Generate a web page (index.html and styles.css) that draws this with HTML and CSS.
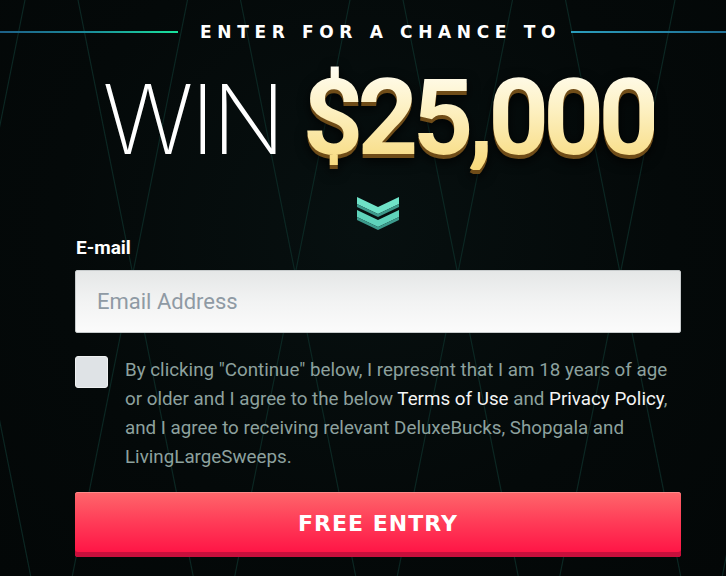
FILE: index.html
```html
<!DOCTYPE html>
<html lang="en">
<head>
<meta charset="utf-8">
<title>Win $25,000</title>
<link rel="stylesheet" href="styles.css">
</head>
<body>
<svg class="bg-lines" width="726" height="576" viewBox="0 0 726 576" aria-hidden="true">
  <g stroke="#0c2723" stroke-width="1.2" fill="none">
    <line x1="-84.5" y1="0" x2="30.7" y2="576"/>
    <line x1="25" y1="0" x2="-90.2" y2="576"/>
    <line x1="78" y1="0" x2="193.2" y2="576"/>
    <line x1="187.5" y1="0" x2="72.3" y2="576"/>
    <line x1="240.5" y1="0" x2="355.7" y2="576"/>
    <line x1="350" y1="0" x2="234.8" y2="576"/>
    <line x1="403" y1="0" x2="518.2" y2="576"/>
    <line x1="512.5" y1="0" x2="397.3" y2="576"/>
    <line x1="565.5" y1="0" x2="680.7" y2="576"/>
    <line x1="675" y1="0" x2="559.8" y2="576"/>
    <line x1="728" y1="0" x2="843.2" y2="576"/>
    <line x1="837.5" y1="0" x2="722.3" y2="576"/>
  </g>
</svg>

<header class="kicker">
  <span class="kicker-line kicker-line-left"></span>
  <h2 class="kicker-text">ENTER FOR A CHANCE TO</h2>
  <span class="kicker-line kicker-line-right"></span>
</header>

<main class="panel">
  <h1 class="headline"><span class="win">WIN</span><span class="amount">$25,000</span></h1>

  <svg class="chevrons" width="42" height="36" viewBox="0 0 42 36" aria-hidden="true">
    <polygon points="0,3 21,13 42,3 42,10 21,20 0,10" fill="#6fe3c8"/>
    <polygon points="0,10 21,20 42,10 42,13 21,23 0,13" fill="#3c9a8c"/>
    <polygon points="0,16 21,26 42,16 42,23 21,33 0,23" fill="#5fd3bb"/>
    <polygon points="0,23 21,33 42,23 42,26 21,36 0,26" fill="#3c9a8c"/>
  </svg>

  <form class="entry-form" onsubmit="return false">
    <label class="field-label" for="email">E-mail</label>
    <input class="field-input" id="email" type="email" placeholder="Email Address">

    <div class="consent">
      <span class="checkbox"></span>
      <p class="consent-text">By clicking "Continue" below, I represent that I am 18 years of age or older and I agree to the below <a class="consent-link" href="#">Terms of Use</a> and <a class="consent-link" href="#">Privacy Policy</a>, and I agree to receiving relevant DeluxeBucks, Shopgala and LivingLargeSweeps.</p>
    </div>

    <button class="cta" type="submit">FREE ENTRY</button>
  </form>
</main>
</body>
</html>
```

FILE: styles.css
```css
* { box-sizing: border-box; }

html, body {
  margin: 0;
  padding: 0;
}

body {
  position: relative;
  width: 726px;
  height: 576px;
  overflow: hidden;
  background: radial-gradient(ellipse at 50% 40%, #071010 0%, #040909 60%, #030707 100%);
  font-family: Roboto, "Liberation Sans", sans-serif;
  color: #fff;
}

.bg-lines {
  position: absolute;
  left: 0;
  top: 0;
  z-index: 0;
}

.kicker {
  position: relative;
  z-index: 1;
  display: flex;
  align-items: center;
  height: 64px;
}

.kicker-line {
  height: 2px;
}

.kicker-line-left {
  width: 178px;
  background: linear-gradient(90deg, #1d5f86 0%, #1b8c9a 50%, #19e39c 100%);
}

.kicker-line-right {
  flex: 1;
  background: linear-gradient(90deg, #2b9dbb 0%, #1f6f94 100%);
}

.kicker-text {
  margin: 0 10px 0 22px;
  font-family: "DejaVu Sans", sans-serif;
  font-weight: 700;
  font-size: 17px;
  letter-spacing: 5.65px;
  white-space: nowrap;
  color: #fff;
}

.panel {
  position: relative;
  z-index: 1;
  width: 606px;
  margin-left: 75px;
  display: flex;
  flex-direction: column;
  align-items: center;
}

.headline {
  margin: 2px 0 0;
  display: flex;
  align-items: baseline;
  gap: 20px;
  height: 112px;
  line-height: 104px;
  font-weight: 400;
}

.win {
  font-family: Inter, "Open Sans", sans-serif;
  font-weight: 200;
  font-size: 96px;
  letter-spacing: -3px;
  color: #fff;
}

.amount {
  font-family: Roboto, sans-serif;
  font-weight: 700;
  font-size: 106px;
  letter-spacing: -5.7px;
  background: linear-gradient(180deg, #fffdf2 0%, #fdf1c4 40%, #f7d97a 100%);
  -webkit-background-clip: text;
  background-clip: text;
  color: transparent;
  filter: drop-shadow(0 4px 0 #6f4c18) drop-shadow(0 3px 6px rgba(0,0,0,0.8));
}

.chevrons {
  margin-top: 16px;
  display: block;
}

.entry-form {
  width: 100%;
  display: flex;
  flex-direction: column;
  margin-top: 5px;
}

.field-label {
  font-weight: 700;
  font-size: 19px;
  line-height: 26px;
  color: #fff;
  padding-left: 1px;
}

.field-input {
  margin-top: 9px;
  height: 63px;
  width: 100%;
  border: 1px solid #c7cbcc;
  border-radius: 2px;
  background: linear-gradient(180deg, #e5e7e7 0%, #f2f3f3 50%, #fbfbfb 100%);
  padding: 0 21px;
  font-family: Roboto, sans-serif;
  font-size: 22px;
  color: #333;
  outline: none;
}

.field-input::placeholder {
  color: #8f9aa4;
}

.consent {
  display: flex;
  gap: 17px;
  margin-top: 22px;
}

.checkbox {
  flex: none;
  width: 33px;
  height: 32px;
  margin-top: 1px;
  border-radius: 3px;
  background: #dfe3e6;
  border: 1px solid #eef0f1;
}

.consent-text {
  margin: 1px 0 0;
  font-size: 18.8px;
  line-height: 29px;
  color: #8da19e;
}

.consent-link {
  color: #f4f4f4;
  text-decoration: none;
}

.cta {
  margin-top: 20px;
  height: 65px;
  width: 100%;
  border: none;
  border-radius: 3px;
  background: linear-gradient(180deg, #fe676b 0%, #ff3d58 45%, #ff0f43 100%);
  box-shadow: inset 0 -5px 0 #c80f3c, inset 0 1px 0 #ff8a8a;
  font-family: "DejaVu Sans", sans-serif;
  font-weight: 700;
  font-size: 22px;
  letter-spacing: 1px;
  color: #fff;
  padding-bottom: 4px;
  cursor: pointer;
}
```
